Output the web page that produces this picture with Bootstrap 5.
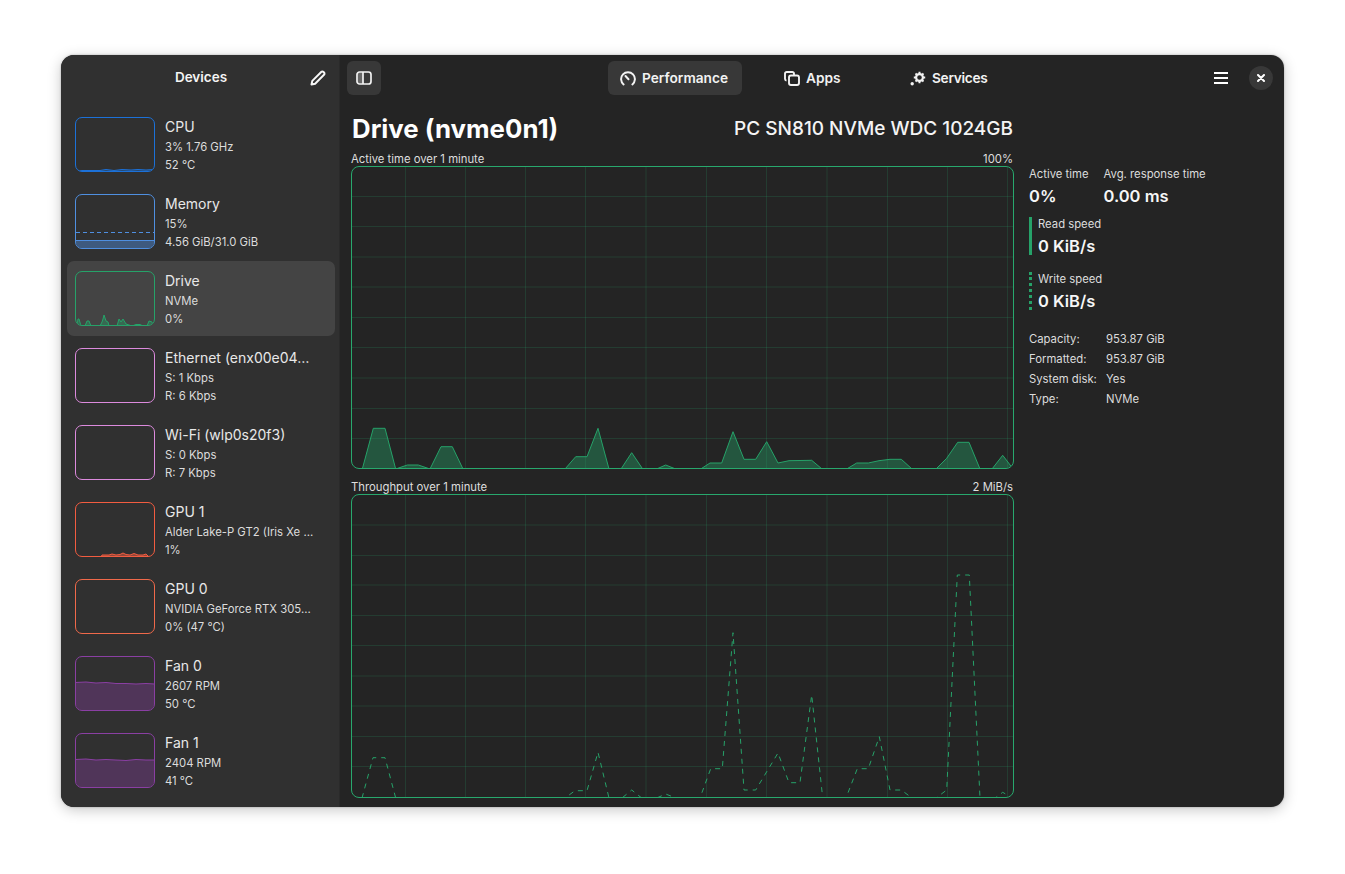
<!DOCTYPE html>
<html lang="en">
<head>
<meta charset="utf-8">
<title>Resources</title>
<link href="https://cdn.jsdelivr.net/npm/bootstrap@5.3.0/dist/css/bootstrap.min.css" rel="stylesheet">
<style>
html,body{height:100%}
body{background:#fff;font-family:Inter,"Noto Sans",sans-serif;color:#fff;padding:55px 0 0 61px;font-size:12px;overflow:hidden}
.app-window{width:1223px;height:752px;border-radius:13px;overflow:hidden;background:#242424;box-shadow:0 3px 14px rgba(0,0,0,.22),0 0 2px rgba(0,0,0,.3)}
.side-pane{width:279px;background:#303030;border-right:1px solid #2a2a2a;flex:none}
.side-head{height:46px;position:relative;padding-bottom:1px}
.side-title{font-size:13.5px;font-weight:600;width:100%;text-align:center;color:#f4f4f4;padding-left:2px}
.side-edit{position:absolute;right:13px;top:15px;line-height:0}
.dev-list{padding:6px 4px 0 6px;gap:2px}
.dev-item{height:75px;padding:10px 8px;border-radius:7px;gap:10px;color:#e6e6e6}
.dev-item.on{background:#444}
.mini{width:80px;height:55px;flex:none;border-radius:7px;border:1px solid var(--c);overflow:hidden}
.mini svg{display:block;width:100%;height:100%}
.dev-text{min-width:0;width:150px}
.dev-name{font-size:14px;line-height:20px;margin-bottom:1px;color:#e8e8e8}
.dev-sub{font-size:11.3px;line-height:18px;color:#dcdcdc;white-space:nowrap}
.main-pane{min-width:0}
.top-bar{height:46px;padding:6px 11px 0 7px;position:relative}
.square-btn{width:34px;height:34px;border-radius:6px;background:#383838}
.tabs-wrap{position:absolute;left:268px;top:6px;gap:0}
.tab-item{height:34px;font-size:13.7px;font-weight:600;border-radius:6px;gap:6px;color:#f2f2f2;padding:0 13px 0 12px}
.tab-item.on{background:#383838;width:134px}
.tab-apps{margin-left:42px;width:84px}
.tab-serv{margin-left:42px;letter-spacing:-.3px}
.menu-btn{position:absolute;right:56px;top:17px;line-height:0}
.close-btn{position:absolute;right:11px;top:11px;width:24px;height:24px;border-radius:50%;background:#383838}
.body-row{padding:0 11px 9px 11px;gap:15px;min-height:0}
.chart-col{width:663px;flex:none}
.head-row{height:51px;padding:11px 1px 0 0}
.big-title{font-size:25.800px;font-weight:700;line-height:34px;margin:0;padding-left:1px;color:#fff}
.big-sub{font-size:19px;font-weight:500;line-height:34px;color:#f4f4f4}
.cap-row{height:14px;font-size:11.3px;line-height:14px;color:#dedede;padding-right:1px}
.chart-box{width:663px;border-radius:8px;border:1px solid #28a86d;overflow:hidden;margin-bottom:11px;background:#242424}
.chart-box.h1{height:303px}
.chart-box.h2{height:304px;margin-bottom:0}
.chart-box svg{display:block;width:661px;height:100%}
.info-col{padding-top:66px;width:260px}
.stat-label{font-size:11.3px;line-height:14px;color:#dcdcdc;white-space:nowrap}
.stat-value{font-size:16.500px;font-weight:600;line-height:20px;color:#f6f6f6;margin-top:5px;white-space:nowrap}
.stat-pair{gap:15px;margin-bottom:10px;height:40px}
.speed{padding-left:6px;height:38px;margin-bottom:17px;border-left:3px solid #26a269}
.speed.dots{border-left-style:dotted;margin-bottom:19px}
.facts{display:grid;grid-template-columns:77px auto;font-size:11.3px;line-height:20px;color:#dcdcdc;white-space:nowrap}
</style>
</head>
<body>
<div class="app-window d-flex">
  <aside class="side-pane d-flex flex-column">
    <div class="side-head d-flex align-items-center">
      <div class="side-title">Devices</div>
      <span class="side-edit"><svg width="16" height="16" viewBox="0 0 16 16" fill="none" stroke="#f6f6f6" stroke-width="2" stroke-linejoin="round"><path d="M1.500 14.500l.8-3.600L11.200 2a1.600 1.600 0 0 1 2.300 0l.5.5a1.600 1.600 0 0 1 0 2.300L5.100 13.700z"/></svg></span>
    </div>
    <div class="dev-list d-flex flex-column">
      <div class="dev-item d-flex">
        <div class="mini" style="--c:#1c71d8"><svg viewBox="0 0 78 53" preserveAspectRatio="none"><polygon points="0,54 0,52.500 24,52.500 30,51.500 38,52.500 46,51.500 55,52 62,51.500 70,52 78,51.500 78,54" fill="#1c71d8" fill-opacity=".4" stroke="#1c71d8"/></svg></div>
        <div class="dev-text"><div class="dev-name">CPU</div><div class="dev-sub">3% 1.76 GHz</div><div class="dev-sub">52 °C</div></div>
      </div>
      <div class="dev-item d-flex">
        <div class="mini" style="--c:#4f8fe0"><svg viewBox="0 0 78 53" preserveAspectRatio="none"><line x1="0" y1="37.500" x2="78" y2="37.500" stroke="#4f8fe0" stroke-dasharray="4 3"/><rect x="-1" y="45.500" width="80" height="9" fill="#4f8fe0" fill-opacity=".45" stroke="#4f8fe0"/></svg></div>
        <div class="dev-text"><div class="dev-name">Memory</div><div class="dev-sub">15%</div><div class="dev-sub">4.56 GiB/31.0 GiB</div></div>
      </div>
      <div class="dev-item on d-flex">
        <div class="mini" style="--c:#26a269"><svg viewBox="0 0 78 53" preserveAspectRatio="none"><polygon points="1,54 2,47 3,47 5,54 9,54 11,49 13,49 15,54 24,54 26,50 27,47 28,43 30,49 32,50 33,54 41,54 43,47 45,50 47,47 50,52 56,54 60,52.500 64,52.500 67,54 71,54 73,49 76,50 78,54" fill="#26a269" fill-opacity=".4" stroke="#26a269"/></svg></div>
        <div class="dev-text"><div class="dev-name">Drive</div><div class="dev-sub">NVMe</div><div class="dev-sub">0%</div></div>
      </div>
      <div class="dev-item d-flex">
        <div class="mini" style="--c:#dc8add"></div>
        <div class="dev-text"><div class="dev-name">Ethernet (enx00e04…</div><div class="dev-sub">S: 1 Kbps</div><div class="dev-sub">R: 6 Kbps</div></div>
      </div>
      <div class="dev-item d-flex">
        <div class="mini" style="--c:#dc8add"></div>
        <div class="dev-text"><div class="dev-name">Wi-Fi (wlp0s20f3)</div><div class="dev-sub">S: 0 Kbps</div><div class="dev-sub">R: 7 Kbps</div></div>
      </div>
      <div class="dev-item d-flex">
        <div class="mini" style="--c:#f25c40"><svg viewBox="0 0 78 53" preserveAspectRatio="none"><polygon points="25,54 26,52 33,52 36,51 40,52 44,51.500 47,50 50,51.500 54,52 58,50.500 62,52 67,52 70,51 73,54" fill="#f25c40" fill-opacity=".5" stroke="#f25c40"/></svg></div>
        <div class="dev-text"><div class="dev-name">GPU 1</div><div class="dev-sub">Alder Lake-P GT2 (Iris Xe …</div><div class="dev-sub">1%</div></div>
      </div>
      <div class="dev-item d-flex">
        <div class="mini" style="--c:#f0694a"></div>
        <div class="dev-text"><div class="dev-name">GPU 0</div><div class="dev-sub">NVIDIA GeForce RTX 305…</div><div class="dev-sub">0% (47 °C)</div></div>
      </div>
      <div class="dev-item d-flex">
        <div class="mini" style="--c:#8a3fa3"><svg viewBox="0 0 78 53" preserveAspectRatio="none"><polygon points="-1,25.500 10,25 20,26 30,25.500 40,26.500 50,26.500 60,27 70,26.500 79,27 79,54 -1,54" fill="#8a3fa3" fill-opacity=".36" stroke="#8a3fa3"/></svg></div>
        <div class="dev-text"><div class="dev-name">Fan 0</div><div class="dev-sub">2607 RPM</div><div class="dev-sub">50 °C</div></div>
      </div>
      <div class="dev-item d-flex">
        <div class="mini" style="--c:#8a3fa3"><svg viewBox="0 0 78 53" preserveAspectRatio="none"><polygon points="-1,25.500 10,25 20,26 30,25.500 40,26 50,26.500 60,25.500 70,26 79,26 79,54 -1,54" fill="#8a3fa3" fill-opacity=".36" stroke="#8a3fa3"/></svg></div>
        <div class="dev-text"><div class="dev-name">Fan 1</div><div class="dev-sub">2404 RPM</div><div class="dev-sub">41 °C</div></div>
      </div>
    </div>
  </aside>
  <main class="main-pane flex-grow-1 d-flex flex-column">
    <div class="top-bar">
      <div class="square-btn d-flex align-items-center justify-content-center">
        <svg width="16" height="14" viewBox="0 0 16 14" fill="none" stroke="#f2f2f2" stroke-width="1.700"><rect x="1" y="1" width="14" height="12" rx="2.500"/><path d="M7 1v12"/><rect x="1.500" y="1.500" width="5.500" height="11" rx="1.500" fill="#f2f2f2" fill-opacity=".25" stroke="none"/></svg>
      </div>
      <div class="tabs-wrap d-flex">
        <div class="tab-item on d-flex align-items-center">
          <svg width="16" height="15" viewBox="0 0 16 15" fill="none" stroke="#f2f2f2" stroke-width="2" stroke-linecap="round"><path d="M3.600 13.400A6.900 6.900 0 1 1 12.400 13.400"/><path d="M5.500 5l3 3.200"/></svg>
          <span>Performance</span>
        </div>
        <div class="tab-item tab-apps d-flex align-items-center p-0">
          <svg width="16" height="15" viewBox="0 0 16 15" fill="none" stroke="#f2f2f2" stroke-width="1.900"><path d="M2.500 9.500A1.700 1.700 0 0 1 1 8V2.700A1.700 1.700 0 0 1 2.700 1h5.600A1.700 1.700 0 0 1 10 2.700V4"/><rect x="5" y="4.500" width="10" height="9.500" rx="2"/></svg>
          <span>Apps</span>
        </div>
        <div class="tab-item tab-serv d-flex align-items-center p-0">
          <svg width="16" height="15" viewBox="0 0 16 15" fill="none"><circle cx="2.200" cy="12.800" r="1.700" fill="#f2f2f2"/><circle cx="9.500" cy="6.500" r="3.400" stroke="#f2f2f2" stroke-width="2.200"/><path d="M9.500 .8v2M9.500 10.200v2M3.800 6.500h2M13.200 6.500h2M5.500 2.500l1.400 1.400M12.100 9.100l1.400 1.400M5.500 10.500l1.400-1.400M12.100 3.900l1.400-1.400" stroke="#f2f2f2" stroke-width="2"/></svg>
          <span>Services</span>
        </div>
      </div>
      <span class="menu-btn"><svg width="14" height="12" viewBox="0 0 14 12" fill="#fff"><rect width="14" height="2" y="0"/><rect width="14" height="2" y="5"/><rect width="14" height="2" y="10"/></svg></span>
      <div class="close-btn d-flex align-items-center justify-content-center"><svg width="8" height="8" viewBox="0 0 8 8" stroke="#fff" stroke-width="2" stroke-linecap="round"><path d="M1 1l6 6M7 1L1 7"/></svg></div>
    </div>
    <div class="body-row d-flex flex-grow-1">
      <div class="chart-col">
        <div class="head-row d-flex justify-content-between"><h1 class="big-title">Drive (nvme0n1)</h1><div class="big-sub">PC SN810 NVMe WDC 1024GB</div></div>
        <div class="cap-row d-flex justify-content-between"><span>Active time over 1 minute</span><span>100%</span></div>
        <div class="chart-box h1">
          <svg viewBox="352 167 661 301" preserveAspectRatio="none">
            <path d="M352 196.500H1013M352 226.500H1013M352 257H1013M352 287H1013M352 317.500H1013M352 347.500H1013M352 378H1013M352 408.500H1013M352 438.500H1013M405.500 167V468M465.500 167V468M525.500 167V468M585.500 167V468M646 167V468M706.500 167V468M766.500 167V468M827 167V468M887.500 167V468M947.500 167V468M1007.500 167V468" stroke="#26a269" stroke-opacity=".2" fill="none"/>
            <polygon points="362.300,469 373.300,428.300 385,428.300 395.700,469 407.300,465 418.300,465 430,469 441,446.700 452.300,446.700 463,469 565,469 575.700,456.700 587,456.700 598,428.300 609,469 621,469 631.700,452.700 642.700,469 656.700,469 665.700,465 675.700,469 700.700,469 710,463 721.700,463 733,431.700 744,459.300 755.700,459.300 766.700,441.700 778,463 789,460.700 811.700,460.300 822,469 846.700,469 856.700,463 868.300,463 879,460.700 890,459.300 901.300,459.300 912,469 936,469 946.700,458.300 957.700,442.300 969,442.300 980,469 992,469 1002.700,455.300 1014,470" fill="#26a269" fill-opacity=".4" stroke="#26a269" stroke-width="1"/>
          </svg>
        </div>
        <div class="cap-row d-flex justify-content-between"><span>Throughput over 1 minute</span><span>2 MiB/s</span></div>
        <div class="chart-box h2">
          <svg viewBox="352 495 661 302" preserveAspectRatio="none">
            <path d="M352 525H1013M352 555.500H1013M352 585H1013M352 615.500H1013M352 645.500H1013M352 676H1013M352 706H1013M352 736.500H1013M352 766.500H1013M405.500 495V797M465.500 495V797M525.500 495V797M585.500 495V797M646 495V797M706.500 495V797M766.500 495V797M827 495V797M887.500 495V797M947.500 495V797M1007.500 495V797" stroke="#26a269" stroke-opacity=".2" fill="none"/>
            <polyline points="362,798 373,757.700 385,757.700 395.700,798 565,798 575,790.700 587,790.700 598,752.300 609,798 622,798 631.700,790 641.700,798 656.700,798 665.700,794 675.700,798 700,798 710.700,768.700 722.300,768.700 733,632.700 744,790 755.700,790 778,753 789,782.700 800,782.700 811.700,695 822.700,798 846,798 857.300,768.700 868.300,768.700 879.300,736.700 890,790 901.300,790 912,798 936,798 946.700,790 957.300,575 969.300,575 980,798 995.300,798 1002.700,792.300 1014,799" fill="none" stroke="#26a269" stroke-width="1" stroke-dasharray="5 5"/>
          </svg>
        </div>
      </div>
      <div class="info-col">
        <div class="stat-pair d-flex">
          <div><div class="stat-label">Active time</div><div class="stat-value">0%</div></div>
          <div><div class="stat-label">Avg. response time</div><div class="stat-value">0.00 ms</div></div>
        </div>
        <div class="speed"><div class="stat-label">Read speed</div><div class="stat-value">0 KiB/s</div></div>
        <div class="speed dots"><div class="stat-label">Write speed</div><div class="stat-value">0 KiB/s</div></div>
        <div class="facts">
          <span>Capacity:</span><span>953.87 GiB</span>
          <span>Formatted:</span><span>953.87 GiB</span>
          <span>System disk:</span><span>Yes</span>
          <span>Type:</span><span>NVMe</span>
        </div>
      </div>
    </div>
  </main>
</div>
<script src="https://cdn.jsdelivr.net/npm/bootstrap@5.3.0/dist/js/bootstrap.bundle.min.js"></script>
</body>
</html>
